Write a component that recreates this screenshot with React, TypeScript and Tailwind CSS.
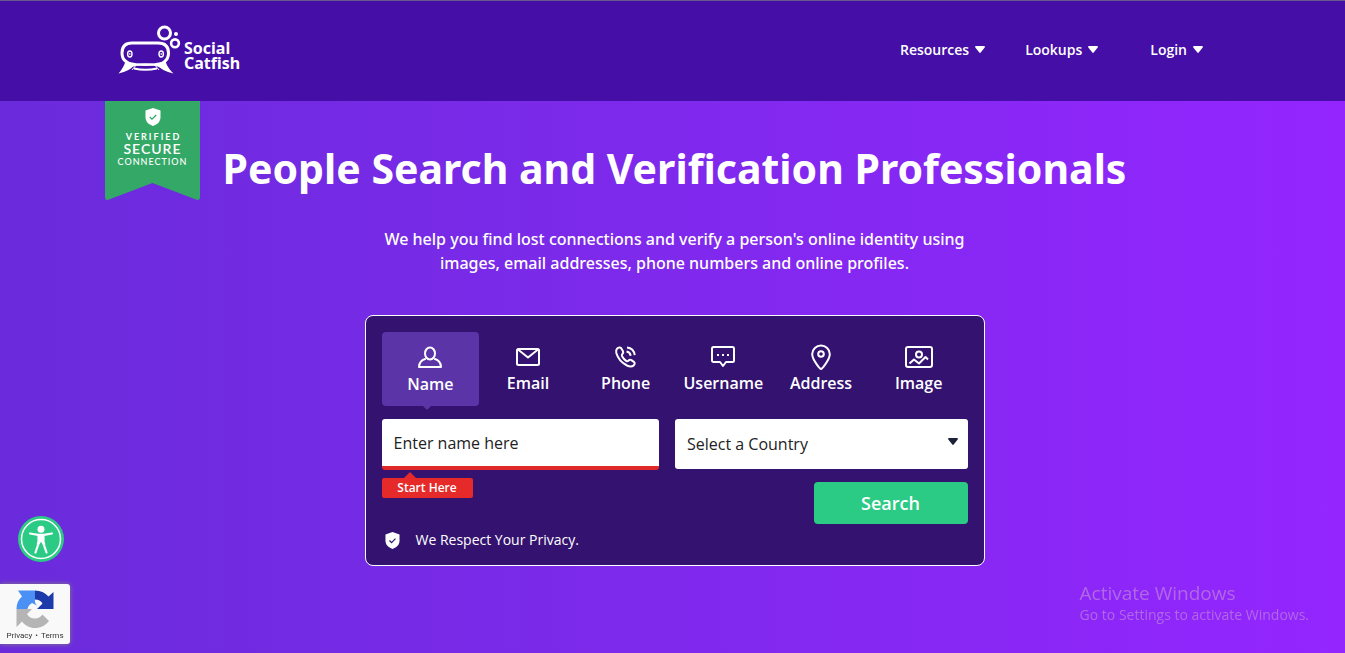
import { useState, type ReactNode } from 'react'

const NAV = [
  { label: 'Resources', to: '#resources' },
  { label: 'Lookups', to: '#lookups' },
  { label: 'Login', to: '#login' },
] as const

const TABS: { label: string; icon: ReactNode }[] = [
  {
    label: 'Name',
    icon: (
      <>
        <ellipse cx="14" cy="9.500" rx="5" ry="6" />
        <path d="M9.800 14.700C5.700 15.700 3.200 18.200 3 23h22c-.2-4.800-2.700-7.300-6.800-8.300" />
      </>
    ),
  },
  {
    label: 'Email',
    icon: (
      <>
        <rect x="3" y="6" width="22" height="16" rx="1.500" />
        <path d="M4 6.500l10 8 10-8" />
      </>
    ),
  },
  {
    label: 'Phone',
    icon: (
      <>
        <path d="M5.200 5.500c1.200-1.300 3-1.500 4-.3l1.800 3c.7 1.200.2 2-.8 3-.6.600-.5 1.300 0 2.200 1 1.800 2.300 3.300 4 4.400.9.600 1.600.5 2.200-.1.9-.9 1.900-1.200 3-.5l2.500 1.700c1.300 1 .8 2.500-.3 3.500-1.700 1.500-4 1.300-6.600.1C9.800 19.800 5.600 14.500 4.300 10c-.5-1.800-.3-3.300.9-4.500z" />
        <path d="M14.500 8.500c2.300.4 3.800 2 4.200 4.200M15 4.500c4.300.5 7.200 3.400 7.700 7.700" />
      </>
    ),
  },
  {
    label: 'Username',
    icon: (
      <>
        <path d="M4.500 4h19c.8 0 1.500.700 1.500 1.500v12c0 .8-.7 1.500-1.500 1.500H17l-3 4-3-4H4.500C3.700 19 3 18.300 3 17.500v-12C3 4.700 3.700 4 4.500 4z" />
        <path d="M8 12h2M13 12h2M18 12h2" />
      </>
    ),
  },
  {
    label: 'Address',
    icon: (
      <>
        <path d="M14 26c-1 0-8.800-9.200-8.800-15A8.800 8.800 0 0 1 14 2.500a8.800 8.800 0 0 1 8.800 8.500c0 5.800-7.800 15-8.800 15z" />
        <circle cx="14" cy="11" r="2.800" />
      </>
    ),
  },
  {
    label: 'Image',
    icon: (
      <>
        <rect x="1" y="4" width="26" height="20" rx="2" />
        <circle cx="14" cy="11.500" r="3" />
        <path d="M4.500 20.500l4.500-4 5 4 6.500-6.500 2.500 2.500" />
      </>
    ),
  },
]

function Caret({ className }: { className?: string }) {
  return (
    <svg viewBox="0 0 10 7" className={className} fill="currentColor" aria-hidden="true">
      <path d="M1 0h8c.9 0 1.200.8.7 1.400L5.700 6.500c-.4.500-1 .5-1.400 0L.3 1.400C-.2.8.1 0 1 0z" />
    </svg>
  )
}

function Shield({ className, check }: { className?: string; check: string }) {
  return (
    <svg viewBox="0 0 16 18" className={className} aria-hidden="true">
      <path d="M8 0l7.500 2.500V9c0 4.500-3 7.500-7.500 9C3.500 16.500.5 13.500.5 9V2.500z" fill="#fff" />
      <path d="M4.800 9l2.200 2.200 4.200-4.200" fill="none" stroke={check} strokeWidth="1.300" />
    </svg>
  )
}

function Logo() {
  return (
    <a href="#home" className="flex items-end pb-[3px]" aria-label="Social Catfish">
      <svg viewBox="0 0 64 50" className="h-[50px] w-16" fill="none" stroke="#fff" aria-hidden="true">
        <circle cx="46.500" cy="8" r="6" strokeWidth="3" />
        <circle cx="57" cy="18.300" r="3.900" strokeWidth="2.600" />
        <circle cx="58" cy="9" r="2" fill="#fff" stroke="none" />
        <path
          d="M8 36.500C4.800 34.500 4 31.500 4 28 4 21.500 7.500 18 14 18h26c7 0 10.500 3.500 10.500 10 0 3.500-1 6.500-4 8.500"
          strokeWidth="3"
        />
        <ellipse cx="11.800" cy="29" rx="2.200" ry="3" strokeWidth="1.400" />
        <ellipse cx="43.200" cy="29" rx="2.200" ry="3" strokeWidth="1.400" />
        <path d="M11.800 28v2M43.200 28v2" strokeWidth="1" />
        <path d="M7 34c1 3-1 8-6.500 14.500C8 46.500 14 44 17 39l-4-1zM48 34c-1 3 1 8 7.500 14.500C48 46.500 42 44 38.500 39l3.500-1z" fill="#fff" stroke="none" />
        <path d="M10 38c10 2.500 25 2.500 35 0" strokeWidth="2.400" />
        <path d="M12 42c8-4 23-4 31 0" strokeWidth="1.600" />
        <path d="M16 43.500c7 1.500 16 1.500 23 0" strokeWidth="1.800" />
        <path d="M14 45l5-6M41 45l-5-6" strokeWidth="1" />
      </svg>
      <span className="flex flex-col pb-1 pl-[2px] font-['Noto_Sans',sans-serif] text-base leading-[15px] font-bold">
        <span>Social</span>
        <span>Catfish</span>
      </span>
    </a>
  )
}

function SecureRibbon() {
  return (
    <div className="absolute top-0 left-0 h-[99px] w-[95px]">
      <svg viewBox="0 0 95 99" className="absolute inset-0 size-full" aria-hidden="true">
        <path d="M0 0h95v96c0 2.500-1.500 3.500-4 2.500L47.500 82 4 98.500C1.500 99.500 0 98.500 0 96z" fill="#34a866" />
      </svg>
      <div className="relative flex flex-col items-center pt-[7px] font-['Lato',sans-serif] text-white">
        <Shield className="h-[18px] w-4" check="#34a866" />
        <span className="pt-1 pl-[2px] text-[9px] leading-[13px] font-bold tracking-[2px]">VERIFIED</span>
        <span className="text-sm leading-3 font-semibold tracking-[1px]">SECURE</span>
        <span className="text-[9px] leading-[13px] font-medium tracking-[1px]">CONNECTION</span>
      </div>
    </div>
  )
}

function SearchCard() {
  const [active, setActive] = useState('Name')

  return (
    <form
      className="mx-auto mt-10 w-full max-w-[620px] rounded-lg border border-white bg-[#341270] px-4 pt-4 pb-[13px]"
      onSubmit={(e) => e.preventDefault()}
    >
      <div role="tablist" className="grid grid-cols-3 sm:grid-cols-6">
        {TABS.map(({ label, icon }) => (
          <button
            key={label}
            type="button"
            role="tab"
            aria-selected={active === label}
            onClick={() => setActive(label)}
            className={`relative flex h-[74px] flex-col items-center rounded text-base leading-6 font-semibold ${
              active === label ? 'bg-[#5b35a8] pt-3' : 'pt-[11px]'
            }`}
          >
            <svg viewBox="0 0 28 28" className="size-7" fill="none" stroke="currentColor" strokeWidth="2" strokeLinejoin="round" aria-hidden="true">
              {icon}
            </svg>
            {label}
            {active === label && (
              <svg viewBox="0 0 10 5" className="absolute -bottom-1 left-10 h-[5px] w-[10px]" fill="#5b35a8" aria-hidden="true">
                <path d="M0 0h10L5 5z" />
              </svg>
            )}
          </button>
        ))}
      </div>

      <div className="mt-[13px] grid gap-4 sm:grid-cols-[277fr_292fr]">
        <input
          aria-label="Name"
          placeholder="Enter name here"
          className="h-[51px] w-full min-w-0 rounded-[3px] border-b-4 border-[#e02828] bg-white px-3 text-base text-[#222] outline-none placeholder:text-[#222]"
        />
        <div className="relative">
          <select
            aria-label="Country"
            className="h-[50px] w-full appearance-none rounded-[3px] bg-white px-3 text-base text-[#222] outline-none"
          >
            <option>Select a Country</option>
            <option>United States</option>
            <option>Canada</option>
            <option>United Kingdom</option>
          </select>
          <Caret className="pointer-events-none absolute top-[19px] right-[10px] h-[7px] w-[10px] text-[#1d2238]" />
        </div>
      </div>

      <div className="flex items-start justify-between">
        <div className="relative mt-2 h-5 w-[91px] rounded-[2px] bg-[#e62929] text-center text-xs leading-5 font-semibold">
          <svg viewBox="0 0 12 6" className="absolute -top-[6px] left-[22px] h-[6px] w-3" fill="#e62929" aria-hidden="true">
            <path d="M0 6l6-6 6 6z" />
          </svg>
          Start Here
        </div>
        <button type="submit" className="mt-3 h-[42px] w-[154px] rounded bg-[#2bcb85] text-lg font-semibold">
          Search
        </button>
      </div>

      <p className="mt-1 flex items-center gap-4 pl-[3px] text-sm leading-6 font-medium">
        <Shield className="h-[17px] w-[15px]" check="#341270" />
        We Respect Your Privacy.
      </p>
    </form>
  )
}

function AccessibilityButton() {
  return (
    <button type="button" aria-label="Accessibility options" className="fixed bottom-[91px] left-[18px] size-[46px]">
      <svg viewBox="0 0 46 46" aria-hidden="true">
        <circle cx="23" cy="23" r="23" fill="#2bcb85" />
        <circle cx="23" cy="23" r="19.500" fill="none" stroke="#fff" strokeWidth="1.500" />
        <circle cx="23" cy="13.200" r="3.500" fill="#fff" />
        <path
          d="M12 17.500l8 1.300h6l8-1.300M21 20v6l-3.500 10.500M25 20v6l3.500 10.500"
          fill="none"
          stroke="#fff"
          strokeWidth="2.200"
          strokeLinecap="round"
        />
        <path d="M19.500 18h7v7.500l1 3h-2.500L23 26l-2 2.500h-2.500l1-3z" fill="#fff" />
      </svg>
    </button>
  )
}

function RecaptchaBadge() {
  return (
    <div className="fixed bottom-[9px] left-0 flex h-[60px] w-[70px] flex-col items-center rounded-r-[3px] bg-[#f9f9f9] pt-[5px] shadow-[0_0_5px_gray]">
      <svg viewBox="0 0 40 40" className="size-10" aria-hidden="true">
        <path d="M20 1.500c5.500 0 10 2.300 13.500 6L38.500 3v17H22l5.500-5.500c-1.500-2.800-4-4-7.500-4z" fill="#1c3aa9" />
        <path d="M20 1.500v9c-.5 2.500.5 4.500 2 6l-5-2.500c-2.500 1.300-4 3.500-4.500 6H1.500c0-5.500 2-9.500 5.500-12.500L3 1.500z" fill="#4a90f5" />
        <path d="M1.500 20H17l-5 5c1.700 3 4.500 4.500 8 4.500 3 0 5.500-1.500 7.500-4l6.500 6.500c-3.500 4.500-8.500 7-14 7-5.300 0-10-2.500-13-6.500L1.500 38z" fill="#b5b5b5" />
      </svg>
      <p className="flex gap-[3px] font-['Roboto',sans-serif] text-[8px] leading-[14px] text-[#333]">
        <a href="#privacy">Privacy</a>
        <span>•</span>
        <a href="#terms">Terms</a>
      </p>
    </div>
  )
}

export default function App() {
  return (
    <div className="flex min-h-screen flex-col font-['Open_Sans',sans-serif] text-white">
      <header className="border-t border-[#6a5a8c] bg-[#450ea6]">
        <div className="mx-auto flex h-[100px] max-w-[1109px] items-center justify-between pr-6">
          <Logo />
          <nav className="flex items-center gap-10 pb-[3px] text-sm font-semibold">
            {NAV.map(({ label, to }) => (
              <a key={label} href={to} className="flex items-center gap-[6px] last:ml-3">
                {label}
                <Caret className="h-[7px] w-[10px]" />
              </a>
            ))}
          </nav>
        </div>
      </header>

      <main className="flex-1 bg-linear-to-r from-[#6a2bdb] to-[#9425ff]">
        <div className="relative mx-auto max-w-[1135px] py-10 pl-1">
          <SecureRibbon />
          <h1 className="text-center font-['Noto_Sans',sans-serif] text-[41px] leading-[54px] font-bold">
            People Search and Verification Professionals
          </h1>
          <p className="mx-auto mt-8 max-w-[620px] text-center font-['Noto_Sans',sans-serif] text-base leading-6 font-medium">
            We help you find lost connections and verify a person's online identity using images, email addresses,
            phone numbers and online profiles.
          </p>
          <SearchCard />
        </div>
      </main>

      <AccessibilityButton />
      <RecaptchaBadge />
      <div className="pointer-events-none fixed right-9 bottom-7 text-[#b168e4]">
        <p className="text-[19px] leading-6">Activate Windows</p>
        <p className="text-sm leading-5">Go to Settings to activate Windows.</p>
      </div>
    </div>
  )
}
